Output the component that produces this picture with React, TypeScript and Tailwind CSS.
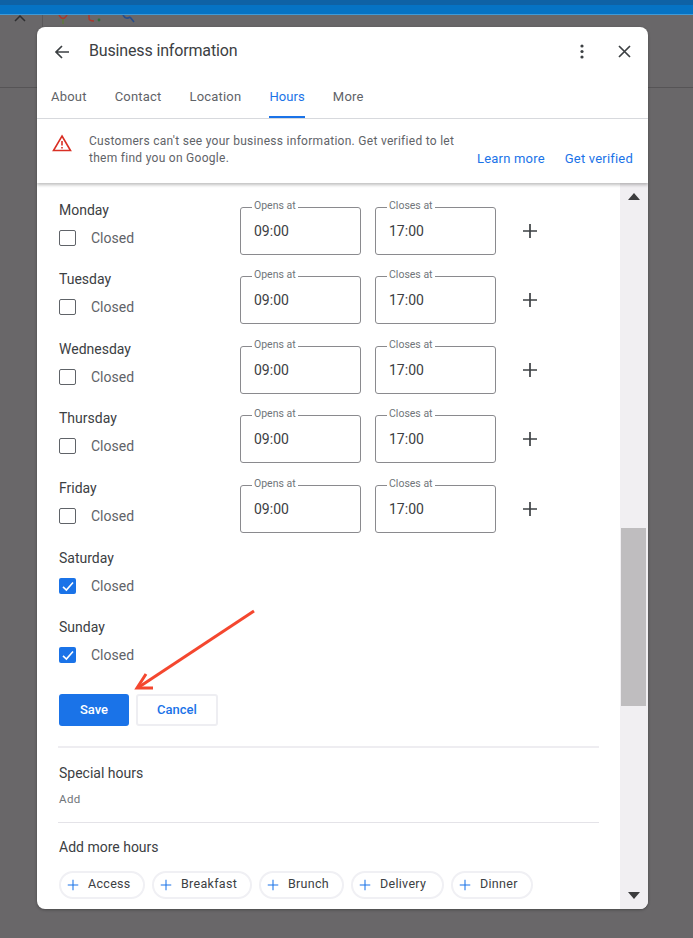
const font = { fontFamily: 'Roboto, sans-serif' };

function Check({ on }: { on: boolean }) {
  if (on) {
    return (
      <span className="flex h-4 w-[17px] items-center justify-center rounded-[2px] bg-[#1a73e8]">
        <svg width="14" height="14" viewBox="0 0 14 14" fill="none" stroke="#fff" strokeWidth="1.6">
          <path d="M2 7.8 L5.4 11 L12 3.4" />
        </svg>
      </span>
    );
  }
  return <span className="block h-4 w-[17px] rounded-[2px] border border-[#5f6368]" />;
}

function Field({ label, value }: { label: string; value: string }) {
  return (
    <div className="relative h-[48px] w-[121px] rounded-[3px] border border-[#8a8a8e]">
      <span className="absolute -top-[9px] left-[11px] bg-white px-[2px] text-[10.5px] leading-[14px] text-[#70757a]">{label}</span>
      <span className="block pl-[13px] pt-[14px] text-[14px] leading-[18px] text-[#3c4043]">{value}</span>
    </div>
  );
}

function Plus({ size, color, width }: { size: number; color: string; width: number }) {
  return (
    <svg width={size} height={size} viewBox="0 0 16 16" fill="none" stroke={color} strokeWidth={width}>
      <path d="M8 1 V15 M1 8 H15" />
    </svg>
  );
}

function DayRow({ day, closed }: { day: string; closed?: boolean }) {
  return (
    <div className="flex h-[69.67px] items-start">
      <div className="w-[181px]">
        <div className="text-[14px] leading-[18px] text-[#3c4043]">{day}</div>
        <label className="mt-[10px] flex h-[18px] items-center">
          <Check on={!!closed} />
          <span className="ml-[15px] text-[14px] leading-[18px] text-[#5f6368]">Closed</span>
        </label>
      </div>
      {!closed && (
        <div className="mt-[6px] flex items-center">
          <Field label="Opens at" value="09:00" />
          <div className="w-[14px]" />
          <Field label="Closes at" value="17:00" />
          <div className="ml-[26px]">
            <Plus size={16} color="#3c4043" width={1.7} />
          </div>
        </div>
      )}
    </div>
  );
}

function Chip({ label, width }: { label: string; width: string }) {
  return (
    <div className={`flex h-[28px] items-center rounded-full border-2 border-[#f0f0f4] pl-[6px] ${width}`}>
      <Plus size={12} color="#1a73e8" width={1.4} />
      <span className="ml-[9px] text-[12.5px] tracking-[0.3px] text-[#3c4043]">{label}</span>
    </div>
  );
}

export default function App() {
  const days = ['Monday', 'Tuesday', 'Wednesday', 'Thursday', 'Friday'];
  const tabs = ['About', 'Contact', 'Location', 'Hours', 'More'];
  return (
    <div className="relative h-[938px] w-[693px] overflow-hidden bg-[#696769]" style={font}>
      <div className="h-[5px] bg-[#0f62a5]" />
      <div className="h-[10px] border-b border-[#3f9ad8] bg-[#0673c4]" />
      <div className="h-[73px] border-b border-[#565456]">
        <div className="flex h-[22px] items-start">
          <div className="flex h-[22px] w-[43px] justify-center border-r border-[#5a585a] pr-[2px]">
            <svg width="12" height="7" viewBox="0 0 12 7" fill="none" stroke="#2e2e30" strokeWidth="1.5">
              <path d="M1 6 L6 1 L11 6" />
            </svg>
          </div>
          <svg className="ml-[15px]" width="10" height="9" viewBox="0 0 10 9" fill="none" stroke="#a8382e" strokeWidth="1.5">
            <path d="M1 0 Q5 7 9 0" />
            <path d="M5 4 V9" stroke="#5f7a3c" />
          </svg>
          <svg className="ml-[20px]" width="14" height="8" viewBox="0 0 14 8" fill="none" stroke="#a8382e" strokeWidth="1.5">
            <path d="M1 0 V3 Q1 6 6 6" />
            <circle cx="11" cy="5" r="1.4" fill="#2f6b3a" stroke="none" />
          </svg>
          <svg className="ml-[20px]" width="14" height="8" viewBox="0 0 14 8" fill="none" stroke="#274d8c" strokeWidth="1.6">
            <path d="M1 0 Q4 5 8 2 M8 2 L12 7" />
          </svg>
        </div>
      </div>

      <div className="absolute left-[37px] top-[27px] flex h-[882px] w-[611px] flex-col overflow-hidden rounded-[8px] bg-white shadow-[0_1px_3px_rgba(0,0,0,0.3)]">
        <div className="flex h-[49px] shrink-0 items-center pl-[17px] pr-[17px]">
          <svg width="16" height="16" viewBox="0 0 16 16" fill="none" stroke="#3c4043" strokeWidth="1.7">
            <path d="M15 8 H2 M8 2 L2 8 L8 14" />
          </svg>
          <span className="mb-[2px] ml-[19px] text-[16px] tracking-[-0.15px] text-[#3c4043]">Business information</span>
          <div className="ml-auto flex items-center gap-[34px]">
            <svg width="4" height="15" viewBox="0 0 4 15" fill="#3c4043">
              <circle cx="2" cy="2" r="1.6" />
              <circle cx="2" cy="7.5" r="1.6" />
              <circle cx="2" cy="13" r="1.6" />
            </svg>
            <svg width="13" height="13" viewBox="0 0 13 13" fill="none" stroke="#3c4043" strokeWidth="1.7">
              <path d="M1 1 L12 12 M12 1 L1 12" />
            </svg>
          </div>
        </div>
        <div className="flex h-[43px] shrink-0 gap-[28px] border-b border-[#dadce0] pl-[14px]">
          {tabs.map((t) => (
            <div
              key={t}
              className={
                t === 'Hours'
                  ? 'relative flex h-[42px] items-center text-[13px] tracking-[0.1px] text-[#1a73e8]'
                  : 'flex h-[42px] items-center text-[13px] tracking-[0.2px] text-[#5f6368]'
              }
            >
              {t}
              {t === 'Hours' && <span className="absolute bottom-0 left-0 right-0 h-[2px] bg-[#1a73e8]" />}
            </div>
          ))}
        </div>
        <div className="z-10 flex h-[64px] shrink-0 items-start pl-[15px] pr-[15px] pt-[14px] shadow-[0_2px_3px_rgba(0,0,0,0.25)]">
          <svg className="mt-[1px]" width="20" height="18" viewBox="0 0 20 18" fill="none" stroke="#d93025" strokeWidth="1.6">
            <path d="M10 2 L18.5 16.5 H1.5 Z" />
            <path d="M10 7 V11.5 M10 13 V14.6" />
          </svg>
          <div className="ml-[17px] w-[375px] text-[12px] leading-[17px] tracking-[0.28px] text-[#5f6368]">
            Customers can't see your business information. Get verified to let them find you on Google.
          </div>
          <div className="ml-auto mt-[17px] flex gap-[20px] text-[13px] leading-[17px] tracking-[0.2px] text-[#1a73e8]">
            <span>Learn more</span>
            <span>Get verified</span>
          </div>
        </div>

        <div className="flex min-h-0 flex-1">
          <div className="min-w-0 flex-1 pl-[22px] pr-[21px] pt-[17.5px]">
            {days.map((d) => (
              <DayRow key={d} day={d} />
            ))}
            <DayRow day="Saturday" closed />
            <DayRow day="Sunday" closed />
            <div className="mt-[5.5px] flex gap-[7px]">
              <div className="flex h-[32px] w-[70px] items-center justify-center rounded-[3px] bg-[#1a73e8] text-[13px] font-medium text-white">Save</div>
              <div className="flex h-[32px] w-[82px] items-center justify-center rounded-[3px] border-2 border-[#eeeef2] text-[13px] font-medium text-[#1a73e8]">Cancel</div>
            </div>
            <div className="-ml-px mt-[20px] h-[2px] bg-[#eeedf1]" />
            <div className="mt-[16px] text-[14px] leading-[18px] text-[#3c4043]">Special hours</div>
            <div className="mt-[9px] text-[11.5px] leading-[16px] tracking-[0.4px] text-[#70757a]">Add</div>
            <div className="-ml-px mt-[15px] h-px bg-[#e4e3e8]" />
            <div className="mt-[15px] text-[14px] leading-[18px] text-[#3c4043]">Add more hours</div>
            <div className="mt-[15px] flex gap-[7px]">
              <Chip label="Access" width="w-[86px]" />
              <Chip label="Breakfast" width="w-[100px]" />
              <Chip label="Brunch" width="w-[85px]" />
              <Chip label="Delivery" width="w-[93px]" />
              <Chip label="Dinner" width="w-[82px]" />
            </div>
          </div>
          <div className="flex w-[28px] shrink-0 flex-col items-center bg-[#f1eff2] pt-[10px]">
            <span className="h-0 w-0 border-x-[6px] border-b-[7px] border-x-transparent border-b-[#3c3c3e]" />
            <div className="mr-[2px] mt-[328px] h-[178px] w-[25px] bg-[#bfbdbf]" />
            <span className="mb-[10px] mt-auto h-0 w-0 border-x-[6px] border-t-[7px] border-x-transparent border-t-[#3c3c3e]" />
          </div>
        </div>
      </div>

      <svg className="absolute left-0 top-0" width="693" height="938" fill="none" stroke="#f4472f" strokeWidth="3">
        <path d="M254 611 L139 687" />
        <path d="M146 674 L137 688 L153 688" />
      </svg>
    </div>
  );
}
